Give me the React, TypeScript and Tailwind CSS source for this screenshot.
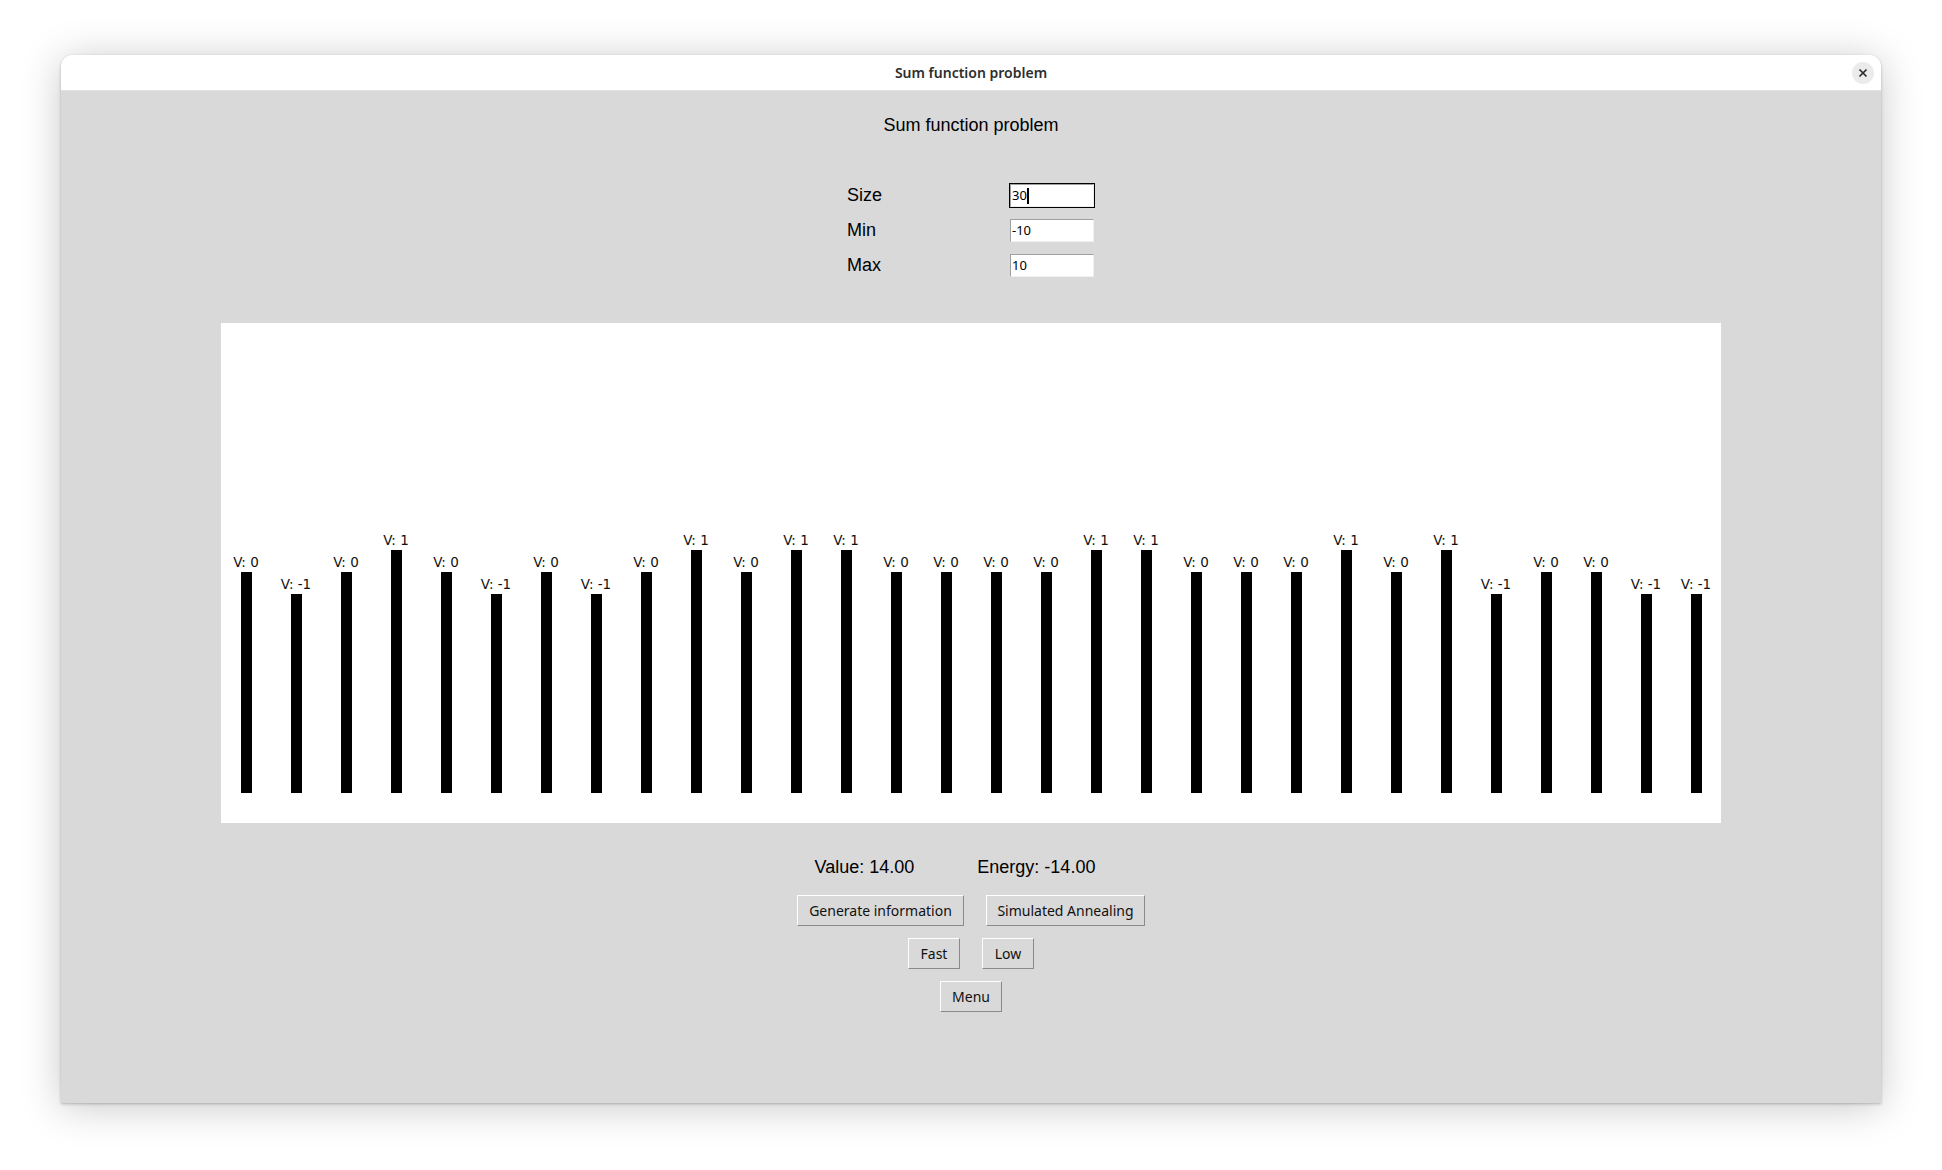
import React from 'react';
import { X } from 'lucide-react';

const values = [0, -1, 0, 1, 0, -1, 0, -1, 0, 1, 0, 1, 1, 0, 0, 0, 0, 1, 1, 0, 0, 0, 1, 0, 1, -1, 0, 0, -1, -1];

const sans = "font-['Liberation_Sans',Arial,sans-serif]";

const Field = ({ label, value, focused }: { label: string; value: string; focused?: boolean }) => (
  <>
    <div className={`${sans} text-[18px] leading-[21px] text-black flex items-center h-[35px]`}>{label}</div>
    <div className="flex items-center h-[35px]">
      <div className={`p-px ${focused ? 'bg-black' : 'bg-[#d9d9d9]'}`}>
        <div className="w-[84px] h-[23px] bg-white border-t border-l border-t-[#a0a0a0] border-l-[#a0a0a0] border-b border-r border-b-[#f0f0f0] border-r-[#f0f0f0] flex items-center px-px">
          <span className="font-['Noto_Sans',sans-serif] text-[13px] leading-none text-black">{value}</span>
          {focused && <span className="w-[2px] h-[16px] bg-black" />}
        </div>
      </div>
    </div>
  </>
);

const TkButton = ({ children, w }: { children: React.ReactNode; w: string }) => (
  <button
    className={`${w} h-[31px] bg-[#d9d9d9] border border-t-white border-l-white border-b-[#8a8a8a] border-r-[#8a8a8a] font-['Noto_Sans',sans-serif] text-[14px] text-[#111] flex items-center justify-center whitespace-nowrap`}
  >
    {children}
  </button>
);

const Bar = ({ v }: { v: number }) => {
  const h = 221 + v * 22;
  return (
    <div className="w-[50px] flex flex-col items-center justify-end">
      <span className="font-['DejaVu_Sans','Noto_Sans',sans-serif] text-[13.5px] leading-[15px] text-[#111] mb-[2px] whitespace-nowrap">
        V: {v}
      </span>
      <div className="w-[11px] bg-black" style={{ height: h }} />
    </div>
  );
};

export default function App() {
  return (
    <div className="w-[1942px] h-[1170px] bg-white pt-[55px] pl-[61px]">
      <div className="w-[1820px] h-[1048px] flex flex-col rounded-t-[12px] overflow-hidden shadow-[0_4px_40px_rgba(0,0,0,0.22),0_1px_3px_rgba(0,0,0,0.25)]">
        {/* title bar */}
        <div className="h-[36px] bg-white border-b border-[#e2e2e2] flex items-center relative shrink-0">
          <div className="flex-1 text-center font-['Noto_Sans',sans-serif] font-semibold text-[14px] text-[#2e2e2e]">
            Sum function problem
          </div>
          <div className="absolute right-[7px] top-[7px] w-[22px] h-[22px] rounded-full bg-[#ebebeb] flex items-center justify-center">
            <X size={12} strokeWidth={3.5} className="text-[#2e2e2e]" />
          </div>
        </div>

        {/* content */}
        <div className="flex-1 bg-[#d9d9d9] flex flex-col items-center">
          <div className={`${sans} text-[18px] leading-[21px] text-black mt-[24px]`}>Sum function problem</div>

          <div className="grid grid-cols-[162px_86px] mt-[42px]">
            <Field label="Size" value="30" focused />
            <Field label="Min" value="-10" />
            <Field label="Max" value="10" />
          </div>

          <div className="w-[1500px] h-[500px] bg-white mt-[40px] flex items-end pb-[30px]">
            {values.map((v, i) => (
              <Bar key={i} v={v} />
            ))}
          </div>

          <div className={`${sans} text-[18px] leading-[21px] text-black mt-[34px] flex gap-[63px] pr-[32px]`}>
            <span>Value: 14.00</span>
            <span>Energy: -14.00</span>
          </div>

          <div className="flex gap-[22px] mt-[17px]">
            <TkButton w="w-[167px]">Generate information</TkButton>
            <TkButton w="w-[159px]">Simulated Annealing</TkButton>
          </div>
          <div className="flex gap-[22px] mt-[12px]">
            <TkButton w="w-[52px]">Fast</TkButton>
            <TkButton w="w-[52px]">Low</TkButton>
          </div>
          <div className="flex mt-[12px]">
            <TkButton w="w-[62px]">Menu</TkButton>
          </div>
        </div>
      </div>
    </div>
  );
}
